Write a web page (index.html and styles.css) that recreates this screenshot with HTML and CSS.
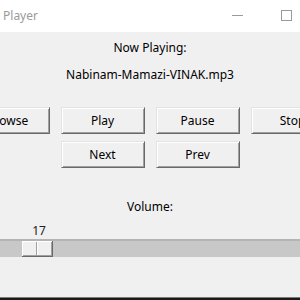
FILE: index.html
```html
<!DOCTYPE html>
<html lang="en">
<head>
    <meta charset="UTF-8">
    <title>Music Player</title>
    <link rel="stylesheet" href="styles.css">
</head>
<body>
    <div class="window">
        <div class="titlebar">
            <span class="title">Music Player</span>
            <span class="controls">
                <span class="min"></span>
                <span class="max"></span>
            </span>
        </div>
        <div class="content">
            <div class="label now">Now Playing:</div>
            <div class="label song">Nabinam-Mamazi-VINAK.mp3</div>

            <div class="row first">
                <button class="btn">Browse</button>
                <button class="btn">Play</button>
                <button class="btn">Pause</button>
                <button class="btn">Stop</button>
            </div>
            <div class="row">
                <button class="btn">Next</button>
                <button class="btn">Prev</button>
            </div>

            <div class="label volume">Volume:</div>
            <div class="scale">
                <div class="scale-value">17</div>
                <div class="trough">
                    <div class="slider"></div>
                </div>
            </div>
        </div>
    </div>
</body>
</html>
```

FILE: styles.css
```css
html, body {
    margin: 0;
    padding: 0;
}
body {
    width: 300px;
    height: 300px;
    overflow: hidden;
    background: #1a1a1a;
    font-family: "Noto Sans", "Open Sans", sans-serif;
    font-size: 12px;
    color: #000;
}
.window {
    height: 297px;
    background: #f0f0f0;
    border-bottom: 1px solid #7a7a7a;
    overflow: hidden;
}
.titlebar {
    height: 32px;
    background: #fff;
    display: flex;
    align-items: center;
    justify-content: space-between;
}
.title {
    color: #9a9a9a;
    font-size: 12px;
    margin-left: -33px;
    margin-top: -1px;
}
.controls {
    display: flex;
    align-items: center;
    margin-right: 8px;
}
.min {
    width: 11px;
    height: 1px;
    background: #9a9a9a;
    margin-right: 38px;
    margin-top: -2px;
}
.max {
    width: 9px;
    height: 9px;
    border: 1px solid #9a9a9a;
    margin-top: -2px;
}
.content {
    display: flex;
    flex-direction: column;
    align-items: center;
}
.label {
    line-height: 16px;
}
.now {
    margin-top: 8px;
}
.song {
    margin-top: 11px;
}
.row {
    display: flex;
    justify-content: center;
    gap: 11px;
    width: 300px;
    margin-top: 7px;
}
.row.first {
    margin-top: 24px;
}
.btn {
    flex-shrink: 0;
    width: 84px;
    height: 27px;
    margin: 0;
    padding: 0;
    font-family: inherit;
    font-size: 12px;
    color: #000;
    background: #f0f0f0;
    border: 1px solid;
    border-color: #e3e3e3 #696969 #696969 #e3e3e3;
    box-shadow: inset 1px 1px 0 #fff, inset -1px -1px 0 #a0a0a0;
}
.volume {
    margin-top: 31px;
}
.scale {
    width: 300px;
    margin-top: 9px;
}
.scale-value {
    width: 40px;
    margin-left: 19px;
    text-align: center;
    line-height: 14px;
    color: #222;
}
.trough {
    position: relative;
    height: 16px;
    margin-top: 1px;
    background: #c8c8c8;
    border-top: 2px solid #b4b4b4;
}
.slider {
    position: absolute;
    left: 22px;
    top: 0;
    width: 30px;
    height: 15px;
    background: linear-gradient(to right, transparent 14px, #a0a0a0 14px, #a0a0a0 15px, #fff 15px, #fff 16px, transparent 16px), #f0f0f0;
    border-right: 1px solid #696969;
    border-bottom: 1px solid #696969;
    box-shadow: inset 1px 1px 0 #fff, inset -1px -1px 0 #a0a0a0;
}
```
